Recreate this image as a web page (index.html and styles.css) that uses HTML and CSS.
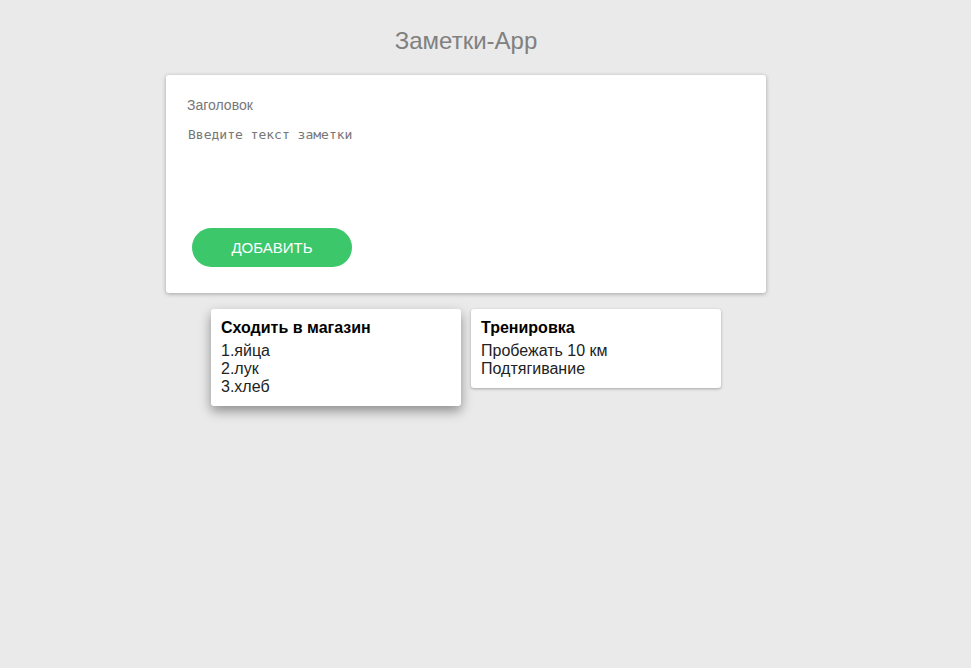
FILE: index.html
```html
<!DOCTYPE html>
<html lang="ru">
<head>
<meta charset="utf-8">
<title>Заметки-App</title>
<link rel="stylesheet" href="styles.css">
</head>
<body>
<div class="app">
  <h1 class="title">Заметки-App</h1>
  <form class="form-card">
    <input class="title-input" type="text" placeholder="Заголовок">
    <textarea class="text-input" placeholder="Введите текст заметки"></textarea>
    <button class="add-btn" type="button">ДОБАВИТЬ</button>
  </form>
  <div class="notes">
    <div class="note note-hover">
      <div class="note-title">Сходить в магазин</div>
      <div class="note-line">1.яйца</div>
      <div class="note-line">2.лук</div>
      <div class="note-line">3.хлеб</div>
    </div>
    <div class="note">
      <div class="note-title">Тренировка</div>
      <div class="note-line">Пробежать 10 км</div>
      <div class="note-line">Подтягивание</div>
    </div>
  </div>
</div>
</body>
</html>
```

FILE: styles.css
```css
html, body {
  margin: 0;
  padding: 0;
  background: #eaeaea;
  height: 100%;
}
body {
  font-family: "Liberation Sans", Arial, sans-serif;
}
.app {
  width: 932px;
  display: flex;
  flex-direction: column;
  align-items: center;
}
.title {
  margin: 27px 0 0;
  height: 30px;
  line-height: 28px;
  font-size: 24px;
  font-weight: normal;
  color: #808080;
}
.form-card {
  margin-top: 18px;
  width: 600px;
  box-sizing: border-box;
  background: #fff;
  border-radius: 3px;
  box-shadow: 0 1px 4px rgba(0,0,0,0.3);
  padding: 20px 20px 26px 20px;
  display: flex;
  flex-direction: column;
  align-items: flex-start;
}
.title-input {
  border: none;
  outline: none;
  padding: 0 1px;
  height: 20px;
  width: 100%;
  box-sizing: border-box;
  font-family: "Liberation Sans", Arial, sans-serif;
  font-size: 14px;
  color: #333;
}
.title-input::placeholder { color: #777; }
.text-input {
  border: none;
  outline: none;
  resize: none;
  margin-top: 10px;
  padding: 2px;
  width: 100%;
  height: 93px;
  box-sizing: border-box;
  font-family: "DejaVu Sans Mono", monospace;
  font-size: 13px;
  line-height: 16px;
  color: #333;
}
.text-input::placeholder { color: #777; }
.add-btn {
  margin: 10px 0 0 6px;
  width: 160px;
  height: 39px;
  border: none;
  border-radius: 20px;
  background: #3cc76b;
  color: #fff;
  font-family: "Liberation Sans", Arial, sans-serif;
  font-size: 15px;
  cursor: pointer;
}
.notes {
  margin-top: 16px;
  display: flex;
  gap: 10px;
  align-items: flex-start;
}
.note {
  width: 250px;
  box-sizing: border-box;
  background: #fff;
  border-radius: 3px;
  padding: 10px;
  box-shadow: 0 1px 3px rgba(0,0,0,0.3);
}
.note-hover {
  box-shadow: 0 5px 12px rgba(0,0,0,0.4);
}
.note-title {
  font-size: 16px;
  font-weight: bold;
  line-height: 18px;
  color: #000;
  margin-bottom: 5px;
}
.note-line {
  font-size: 16px;
  line-height: 18px;
  color: #222;
}
```
